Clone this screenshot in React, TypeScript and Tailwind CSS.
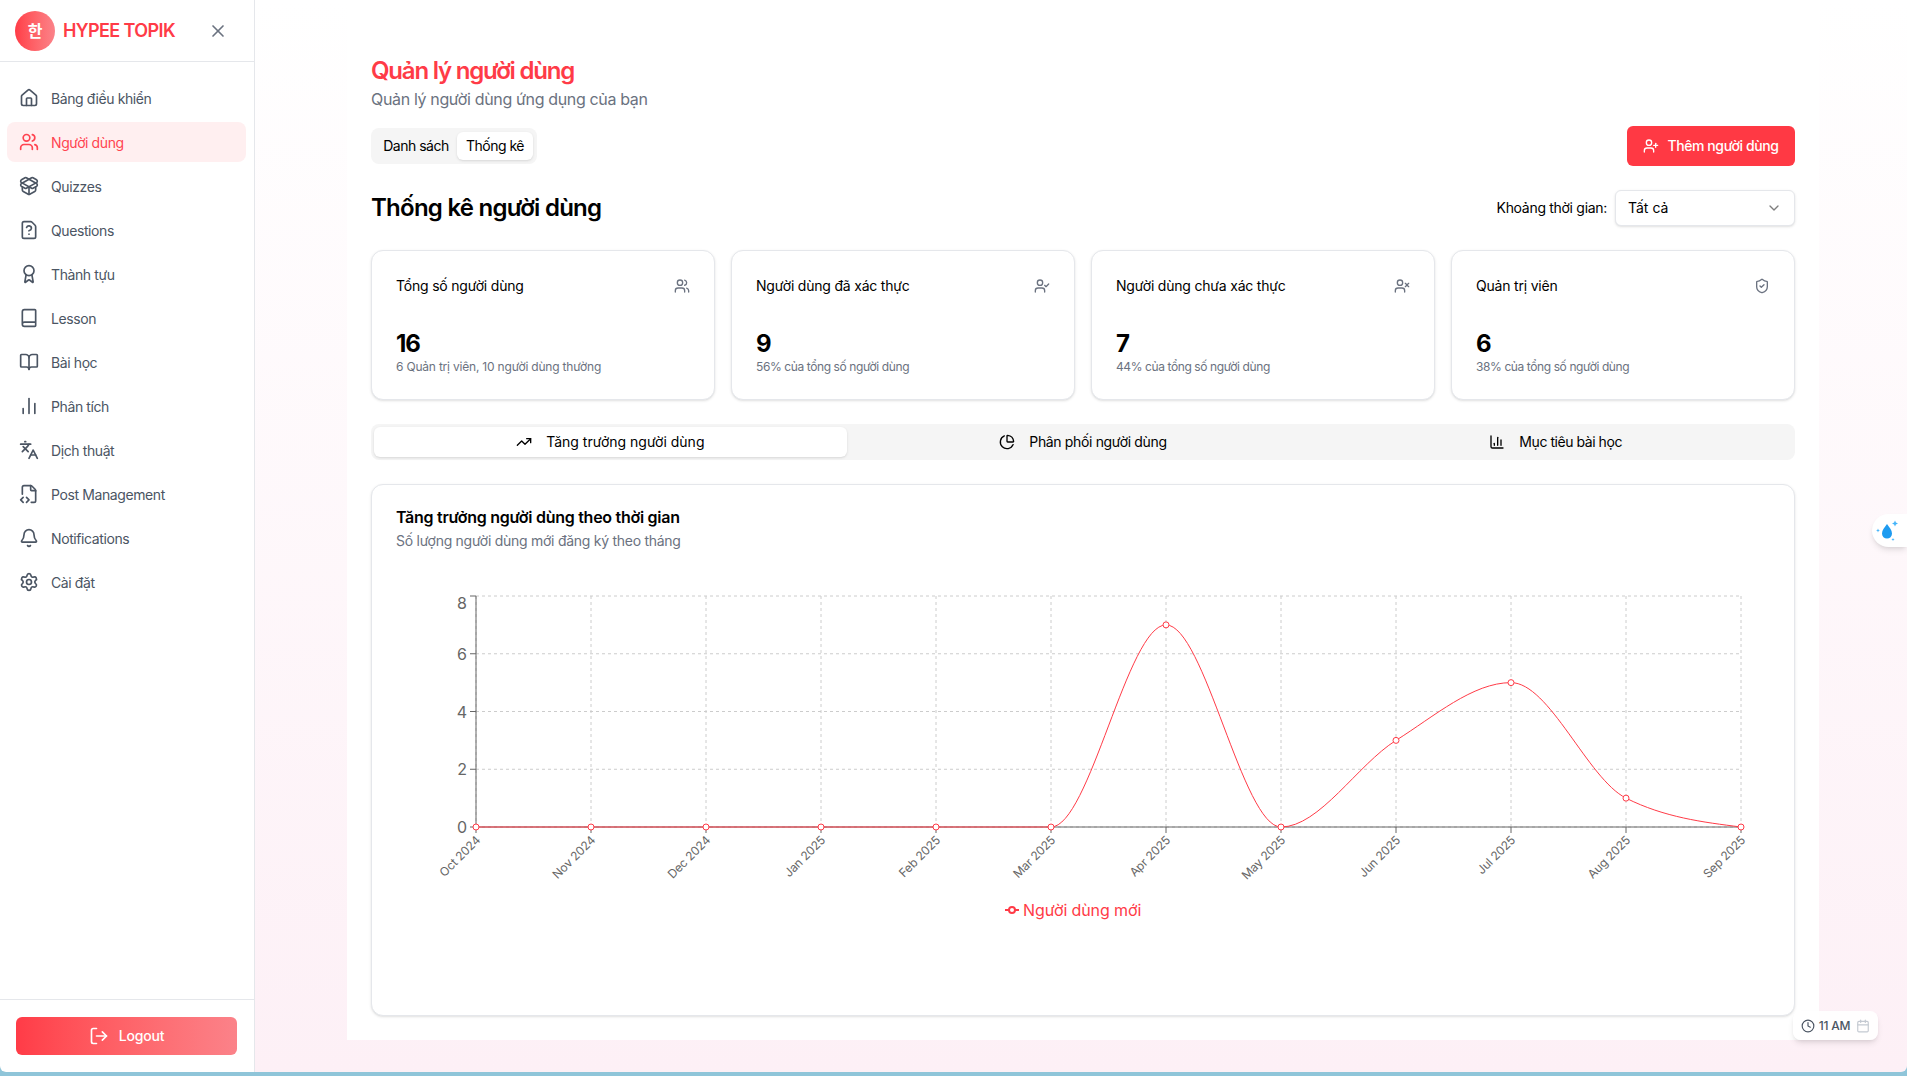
import { Award, BarChart2, BarChart3, Bell, Book, BookOpen, Calendar, ChevronDown, Clock, FileCode2, FileQuestion, Home, Languages, LogOut, PackageOpen, PieChart, Settings, ShieldCheck, TrendingUp, UserCheck, UserPlus, Users, UserX, X } from "lucide-react";

const nav = [
  { label: "Bảng điều khiển", icon: Home },
  { label: "Người dùng", icon: Users, active: true },
  { label: "Quizzes", icon: PackageOpen },
  { label: "Questions", icon: FileQuestion },
  { label: "Thành tựu", icon: Award },
  { label: "Lesson", icon: Book },
  { label: "Bài học", icon: BookOpen },
  { label: "Phân tích", icon: BarChart2 },
  { label: "Dịch thuật", icon: Languages },
  { label: "Post Management", icon: FileCode2 },
  { label: "Notifications", icon: Bell },
  { label: "Cài đặt", icon: Settings },
];

const cards = [
  { title: "Tổng số người dùng", value: "16", sub: "6 Quản trị viên, 10 người dùng thường", icon: Users, subCls: "tracking-[-0.2px]" },
  { title: "Người dùng đã xác thực", value: "9", sub: "56% của tổng số người dùng", icon: UserCheck, subCls: "tracking-[-0.4px]" },
  { title: "Người dùng chưa xác thực", value: "7", sub: "44% của tổng số người dùng", icon: UserX, subCls: "tracking-[-0.4px]" },
  { title: "Quản trị viên", value: "6", sub: "38% của tổng số người dùng", icon: ShieldCheck, subCls: "tracking-[-0.4px]" },
];

const tabs = [
  { label: "Tăng trưởng người dùng", icon: TrendingUp, active: true, cls: "" },
  { label: "Phân phối người dùng", icon: PieChart, cls: "tracking-[-0.35px]" },
  { label: "Mục tiêu bài học", icon: BarChart3, cls: "tracking-[-0.45px]" },
];

const months = ["Oct 2024", "Nov 2024", "Dec 2024", "Jan 2025", "Feb 2025", "Mar 2025", "Apr 2025", "May 2025", "Jun 2025", "Jul 2025", "Aug 2025", "Sep 2025"];
const values = [0, 0, 0, 0, 0, 0, 7, 0, 3, 5, 1, 0];
const X0 = 476;
const STEP = 115;
const Y0 = 827;
const UNIT = 28.875;
const pts = values.map((v, i) => [X0 + i * STEP, Y0 - v * UNIT]);

function monotonePath(p: number[][]) {
  const n = p.length;
  const slopes: number[] = [];
  for (let i = 0; i < n - 1; i++) slopes.push((p[i + 1][1] - p[i][1]) / (p[i + 1][0] - p[i][0]));
  const t: number[] = new Array(n).fill(0);
  for (let i = 1; i < n - 1; i++) {
    const a = slopes[i - 1];
    const b = slopes[i];
    if (a * b <= 0) t[i] = 0;
    else t[i] = (Math.sign(a) + Math.sign(b)) * Math.min(Math.abs(a), Math.abs(b), 0.25 * Math.abs(a + b));
  }
  t[0] = (3 * slopes[0] - t[1]) / 2;
  t[n - 1] = (3 * slopes[n - 2] - t[n - 2]) / 2;
  let d = `M${p[0][0]},${p[0][1]}`;
  for (let i = 0; i < n - 1; i++) {
    const h = (p[i + 1][0] - p[i][0]) / 3;
    d += `C${p[i][0] + h},${p[i][1] + h * t[i]} ${p[i + 1][0] - h},${p[i + 1][1] - h * t[i + 1]} ${p[i + 1][0]},${p[i + 1][1]}`;
  }
  return d;
}

function Chart() {
  return (
    <svg viewBox="396 570 1374 370" width={1374} height={370} className="mt-[19px] block">
      {[0, 2, 4, 6, 8].map((v) => (
        <line key={v} x1={X0} x2={X0 + 11 * STEP} y1={Y0 - v * UNIT} y2={Y0 - v * UNIT} stroke="#ccc" strokeDasharray="3 3" />
      ))}
      {months.map((_, i) => (
        <line key={i} x1={X0 + i * STEP} x2={X0 + i * STEP} y1={Y0 - 8 * UNIT} y2={Y0} stroke="#ccc" strokeDasharray="3 3" />
      ))}
      <line x1={X0} x2={X0} y1={Y0 - 8 * UNIT} y2={Y0} stroke="#666" />
      <line x1={X0} x2={X0 + 11 * STEP} y1={Y0} y2={Y0} stroke="#666" />
      {[0, 2, 4, 6, 8].map((v) => (
        <g key={v}>
          <line x1={X0 - 6} x2={X0} y1={Y0 - v * UNIT} y2={Y0 - v * UNIT} stroke="#666" />
          <text x={467} y={v === 8 ? 609 : Y0 - v * UNIT + 6} textAnchor="end" fill="#666" fontSize={16}>{v}</text>
        </g>
      ))}
      {months.map((m, i) => {
        const x = X0 + i * STEP;
        return (
          <g key={m}>
            <line x1={x} x2={x} y1={Y0} y2={Y0 + 6} stroke="#666" />
            <text x={x + 5} y={841} transform={`rotate(-45 ${x + 5} 841)`} textAnchor="end" fill="#666" fontSize={12} letterSpacing="-0.2">{m}</text>
          </g>
        );
      })}
      <path d={monotonePath(pts)} fill="none" stroke="#ff3b47" strokeWidth={1} />
      {pts.map((p, i) => (
        <circle key={i} cx={p[0]} cy={p[1]} r={3} fill="#fff" stroke="#ff3b47" />
      ))}
      <line x1={1005} x2={1019} y1={910} y2={910} stroke="#ff3b47" strokeWidth={2} />
      <circle cx={1012} cy={910} r={3} fill="#fff" stroke="#ff3b47" strokeWidth={2} />
      <text x={1023} y={916} fill="#ff3b47" fontSize={16} letterSpacing="-0.1">Người dùng mới</text>
    </svg>
  );
}

export default function App() {
  return (
    <div className="h-screen w-full bg-[#8fc5d9] pb-1 overflow-hidden text-black" style={{ fontFamily: '"Inter", "Noto Sans CJK KR", sans-serif' }}>
      <div className="relative flex h-full overflow-hidden rounded-b-md">
        <aside className="flex w-[255px] shrink-0 flex-col border-r border-[#e5e7eb] bg-white shadow-sm">
          <div className="flex h-[62px] shrink-0 items-center border-b border-[#e5e7eb] pl-[15px] pr-[26px]">
            <div className="flex h-10 w-10 items-center justify-center rounded-full bg-gradient-to-r from-[#ff3b47] to-[#fb8289] text-base font-bold text-white">한</div>
            <span className="ml-2 whitespace-nowrap text-lg font-semibold tracking-[-0.6px] text-[#ff3b47]">HYPEE TOPIK</span>
            <X className="ml-auto h-5 w-5 text-[#6b7280]" strokeWidth={2} />
          </div>
          <nav className="flex flex-1 flex-col gap-1 pl-[7px] pr-[8px] pt-4">
            {nav.map((n) => (
              <div key={n.label} className={`flex h-10 items-center gap-3 rounded-lg pl-3 text-sm tracking-[-0.4px] ${n.active ? "bg-[#ffeff0] text-[#ff4450]" : "text-[#4b5563]"}`}>
                <n.icon className="h-5 w-5 shrink-0" strokeWidth={2} />
                <span className="pt-px">{n.label}</span>
              </div>
            ))}
          </nav>
          <div className="shrink-0 border-t border-[#e5e7eb] px-4 py-[17px]">
            <button className="flex h-[38px] w-[221px] items-center justify-center gap-2.5 rounded-md bg-gradient-to-r from-[#ff3b47] to-[#fb8289] text-sm font-medium tracking-[-0.2px] text-white">
              <LogOut className="h-5 w-5" />
              Logout
            </button>
          </div>
        </aside>

        <main className="flex flex-1 bg-gradient-to-b from-white to-[#fdf0f6] pb-8 pl-[92px] pr-[88px]">
          <div className="flex w-full flex-col bg-white px-6 pb-6 pt-[55px]">
            <h1 className="text-2xl font-semibold tracking-[-1.2px] text-[#ff3b47]">Quản lý người dùng</h1>
            <p className="text-base tracking-[-0.35px] text-[#6b7280]">Quản lý người dùng ứng dụng của bạn</p>

            <div className="mt-[15px] flex h-10 items-center justify-between">
              <div className="flex h-9 w-[166px] items-center rounded-lg bg-[#f5f5f5] p-1 text-sm tracking-[-0.5px]">
                <div className="flex h-full flex-1 items-center justify-center">Danh sách</div>
                <div className="flex h-full w-[76px] items-center justify-center rounded-md bg-white shadow-sm">Thống kê</div>
              </div>
              <button className="flex h-10 w-[168px] items-center justify-center gap-2 rounded-md bg-[#ff3944] text-sm font-medium tracking-[-0.4px] text-white">
                <UserPlus className="h-4 w-4" />
                Thêm người dùng
              </button>
            </div>

            <div className="mt-6 flex h-9 items-center justify-between">
              <h2 className="text-2xl font-semibold tracking-[-0.75px]">Thống kê người dùng</h2>
              <div className="flex items-center gap-2">
                <span className="text-sm tracking-[-0.3px]">Khoảng thời gian:</span>
                <div className="flex h-9 w-[180px] items-center justify-between rounded-md border border-[#e5e7eb] bg-white px-3 text-sm shadow-sm">
                  Tất cả
                  <ChevronDown className="h-4 w-4 opacity-50" />
                </div>
              </div>
            </div>

            <div className="mt-6 grid grid-cols-4 gap-4">
              {cards.map((c) => (
                <div key={c.title} className="h-[150px] rounded-xl border border-[#e5e7eb] bg-white p-6 pt-[25px] shadow-sm">
                  <div className="mb-8 flex h-5 items-center justify-between">
                    <span className="text-sm tracking-[-0.2px]">{c.title}</span>
                    <c.icon className="h-4 w-4 text-[#6b7280]" />
                  </div>
                  <div className="h-[31px] text-2xl font-bold tracking-[-1px]">{c.value}</div>
                  <div className={`text-xs text-[#6b7280] ${c.subCls}`}>{c.sub}</div>
                </div>
              ))}
            </div>

            <div className="mt-6 grid h-9 grid-cols-3 rounded-lg bg-[#f5f5f5] p-[3px]">
              {tabs.map((t) => (
                <div key={t.label} className={`flex items-center justify-center gap-3.5 rounded-md text-sm ${t.cls} ${t.active ? "bg-white shadow-sm" : ""}`}>
                  <t.icon className="h-4 w-4" />
                  {t.label}
                </div>
              ))}
            </div>

            <div className="mt-6 flex-1 rounded-xl border border-[#e5e7eb] bg-white px-6 pb-6 pt-5 shadow-sm">
              <h3 className="text-base font-semibold tracking-[-0.27px]">Tăng trưởng người dùng theo thời gian</h3>
              <p className="mt-0.5 text-sm tracking-[-0.27px] text-[#6b7280]">Số lượng người dùng mới đăng ký theo tháng</p>
              <Chart />
            </div>
          </div>
        </main>

        <div className="absolute right-0 top-[514px] flex h-[33px] w-[35px] items-center rounded-l-full bg-white pl-[2px] shadow-md">
          <svg width="26" height="26" viewBox="0 0 26 26" fill="#1e9bf0" className="-translate-y-px">
            <path d="M13 7c2.4 3.4 5 6 5 9.6a5 5 0 0 1-10 0c0-3.6 2.6-6.2 5-9.6z" />
            <path d="M21 3.5l.9 2.1 2.1.9-2.1.9-.9 2.1-.9-2.1-2.1-.9 2.1-.9z" fill="#45b4fa" />
            <path d="M4 11.5l.6 1.4 1.4.6-1.4.6-.6 1.4-.6-1.4-1.4-.6 1.4-.6z" fill="#45b4fa" />
            <path d="M19 21l.5 1.1 1.1.4-1.1.5-.5 1.1-.5-1.1-1.1-.5 1.1-.4z" fill="#45b4fa" />
          </svg>
        </div>

        <div className="absolute left-[1793px] top-[1011px] flex h-[29px] w-[85px] items-center justify-center gap-1 rounded-lg bg-white/90 text-xs font-medium tracking-[-0.2px] text-[#4b5563] shadow-md">
          <Clock className="h-3.5 w-3.5" />
          11 AM
          <Calendar className="ml-0.5 h-3.5 w-3.5 text-[#c4c9d1]" />
        </div>
      </div>
    </div>
  );
}
